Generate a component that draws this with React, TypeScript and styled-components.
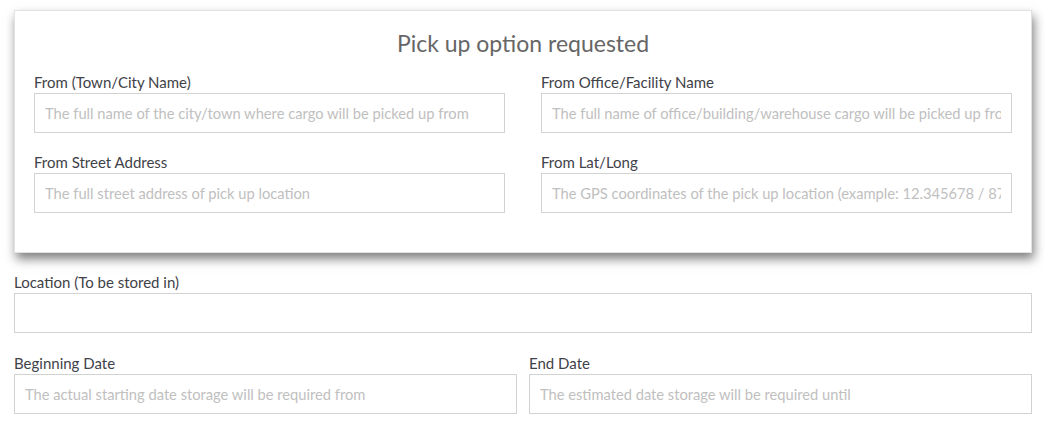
import React from "react";
import styled, { createGlobalStyle } from "styled-components";

const Global = createGlobalStyle`
  html, body { margin: 0; padding: 0; background: #fff; }
  body { font-family: Lato, "Open Sans", Arial, sans-serif; }
  * { box-sizing: border-box; }
`;

const Page = styled.div`
  padding: 10px 13px 0 14px;
  display: flex;
  flex-direction: column;
`;

const Card = styled.section`
  background: #fff;
  border: 1px solid #e2e2e2;
  box-shadow: 2px 6px 10px rgba(0, 0, 0, 0.5);
  padding: 19px 19px 39px;
`;

const Title = styled.h2`
  margin: 0 0 15px;
  text-align: center;
  font-family: Lato, sans-serif;
  font-weight: 400;
  font-size: 23px;
  line-height: 27px;
  color: #666;
`;

const Grid = styled.div<{ $gap: number }>`
  display: grid;
  grid-template-columns: 1fr 1fr;
  column-gap: ${(p) => p.$gap}px;
  row-gap: 19px;
`;

const Field = styled.div`
  display: flex;
  flex-direction: column;
`;

const Label = styled.label`
  font-family: Lato, sans-serif;
  font-size: 15px;
  line-height: 20px;
  color: #3f4248;
  margin-bottom: 1px;
`;

const Input = styled.input`
  height: 40px;
  width: 100%;
  border: 1px solid #d2d2d2;
  padding: 0 10px;
  font-family: Lato, sans-serif;
  font-size: 14.7px;
  color: #333;
  background: #fff;
  outline: none;
  &::placeholder { color: #c0c0c0; }
`;

const Lower = styled.div`
  display: flex;
  flex-direction: column;
  gap: 20px;
  margin-top: 19px;
`;

export default function App() {
  return (
    <>
      <Global />
      <Page>
        <Card>
          <Title>Pick up option requested</Title>
          <Grid $gap={36}>
            <Field>
              <Label>From (Town/City Name)</Label>
              <Input placeholder="The full name of the city/town where cargo will be picked up from" />
            </Field>
            <Field>
              <Label>From Office/Facility Name</Label>
              <Input placeholder="The full name of office/building/warehouse cargo will be picked up from" />
            </Field>
            <Field>
              <Label>From Street Address</Label>
              <Input placeholder="The full street address of pick up location" />
            </Field>
            <Field>
              <Label>From Lat/Long</Label>
              <Input placeholder="The GPS coordinates of the pick up location (example: 12.345678 / 87.654321)" />
            </Field>
          </Grid>
        </Card>
        <Lower>
          <Field>
            <Label>Location (To be stored in)</Label>
            <Input />
          </Field>
          <Grid $gap={12}>
            <Field>
              <Label>Beginning Date</Label>
              <Input placeholder="The actual starting date storage will be required from" />
            </Field>
            <Field>
              <Label>End Date</Label>
              <Input placeholder="The estimated date storage will be required until" />
            </Field>
          </Grid>
        </Lower>
      </Page>
    </>
  );
}
